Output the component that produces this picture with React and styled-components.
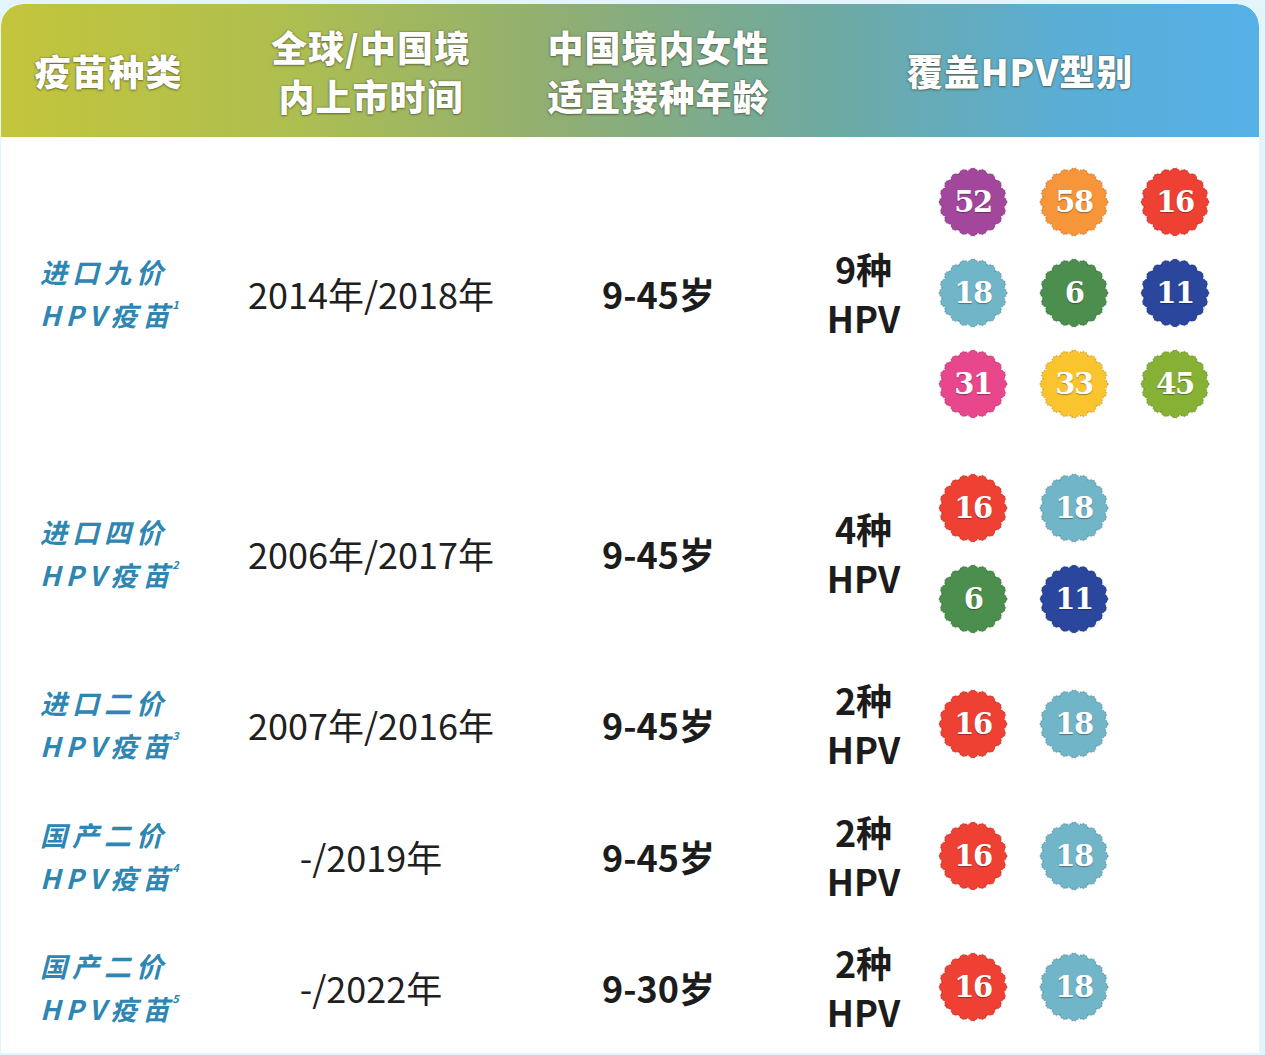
import React from "react";
import styled, { createGlobalStyle } from "styled-components";

const GlobalStyle = createGlobalStyle`
  html, body {
    margin: 0;
    padding: 0;
    background: #e3f5fa;
  }
  body {
    font-family: "Noto Sans CJK SC", "Noto Sans", sans-serif;
  }
`;

const COLORS = {
  52: "#a2479c",
  58: "#f7953a",
  16: "#ee4134",
  18: "#71b5c9",
  6: "#4b8e4e",
  11: "#2a479d",
  31: "#e8478b",
  33: "#f9c42e",
  45: "#86b135",
};

const ROWS = [
  { name: "进口九价", sup: "1", date: "2014年/2018年", age: "9-45岁", count: "9种", types: [52, 58, 16, 18, 6, 11, 31, 33, 45], h: 312, cols: 3 },
  { name: "进口四价", sup: "2", date: "2006年/2017年", age: "9-45岁", count: "4种", types: [16, 18, 6, 11], h: 208, cols: 2 },
  { name: "进口二价", sup: "3", date: "2007年/2016年", age: "9-45岁", count: "2种", types: [16, 18], h: 134, cols: 2 },
  { name: "国产二价", sup: "4", date: "-/2019年", age: "9-45岁", count: "2种", types: [16, 18], h: 130, cols: 2 },
  { name: "国产二价", sup: "5", date: "-/2022年", age: "9-30岁", count: "2种", types: [16, 18], h: 132, cols: 2 },
];

// scalloped seal outline
function sealPath() {
  const pts = [];
  const n = 400;
  for (let i = 0; i <= n; i++) {
    const t = (i / n) * Math.PI * 2;
    const r = 45 + 3.5 * Math.abs(Math.cos(10 * t));
    pts.push(`${(50 + r * Math.cos(t)).toFixed(2)},${(50 + r * Math.sin(t)).toFixed(2)}`);
  }
  return "M" + pts.join("L") + "Z";
}
const SEAL = sealPath();

function Badge({ value }) {
  return (
    <BadgeWrap>
      <svg width="70" height="70" viewBox="0 0 100 100">
        <path d={SEAL} fill={COLORS[value]} stroke="rgba(0,0,0,0.22)" strokeWidth="2.5" strokeDasharray="1.5 3" />
      </svg>
      <BadgeNum>{value}</BadgeNum>
    </BadgeWrap>
  );
}

export default function App() {
  return (
    <>
      <GlobalStyle />
      <Card>
        <Header>
          <HeadCell>疫苗种类</HeadCell>
          <HeadCell>全球/中国境<br />内上市时间</HeadCell>
          <HeadCell>中国境内女性<br />适宜接种年龄</HeadCell>
          <HeadCell $wide>覆盖HPV型别</HeadCell>
        </Header>
        {ROWS.map((r, i) => (
          <Row key={i} $h={r.h}>
            <Name>
              <NameLine>{r.name}</NameLine>
              <NameLine>
                HPV疫苗<Sup>{r.sup}</Sup>
              </NameLine>
            </Name>
            <DateCell>{r.date}</DateCell>
            <Age>{r.age}</Age>
            <Count>
              {r.count}
              <br />
              HPV
            </Count>
            <BadgeGrid $cols={r.cols}>
              {r.types.map((t, j) => (
                <Badge key={j} value={t} />
              ))}
            </BadgeGrid>
          </Row>
        ))}
      </Card>
    </>
  );
}

// ============================== STYLES ==============================

const COLS = "215px 310px 265px 145px 1fr";

const Card = styled.div`
  margin: 4px 6px 5px 1px;
  background: #ffffff;
  border-radius: 22px 22px 0 0;
  overflow: hidden;
`;

const Header = styled.div`
  display: grid;
  grid-template-columns: ${COLS};
  height: 133px;
  align-items: center;
  background: linear-gradient(
    90deg,
    #c3c53b 0%,
    #afbf4f 22%,
    #8fae74 45%,
    #6fa99f 65%,
    #5aaed6 85%,
    #56b1e8 100%
  );
  border-radius: 22px 22px 0 0;
`;

const HeadCell = styled.div`
  grid-column: ${(p) => (p.$wide ? "4 / 6" : "auto")};
  text-align: center;
  color: #ffffff;
  font-size: 36px;
  font-weight: 900;
  line-height: 49px;
  letter-spacing: 1px;
  text-shadow: 0 0 2px rgba(70, 70, 40, 0.75), 0 1px 2px rgba(60, 60, 40, 0.5);
  padding-right: ${(p) => (p.$wide ? "10px" : "0")};
`;

const Row = styled.div`
  display: grid;
  grid-template-columns: ${COLS};
  height: ${(p) => p.$h}px;
  align-items: center;
`;

const Name = styled.div`
  padding-left: 39px;
  color: #2e86b2;
  font-size: 27px;
  font-weight: 700;
  font-style: italic;
  letter-spacing: 5px;
  white-space: nowrap;
`;

const NameLine = styled.div`
  height: 43px;
  line-height: 43px;
`;

const Sup = styled.span`
  display: inline-block;
  font-size: 11px;
  line-height: 11px;
  letter-spacing: 0;
  vertical-align: top;
  margin-top: 6px;
  margin-left: -2px;
`;

const DateCell = styled.div`
  text-align: center;
  font-size: 36px;
  color: #202020;
  white-space: nowrap;
`;

const Age = styled.div`
  text-align: center;
  font-size: 36px;
  font-weight: 700;
  color: #1c1c1c;
`;

const Count = styled.div`
  text-align: center;
  font-size: 36px;
  font-weight: 700;
  color: #1c1c1c;
  line-height: 49px;
`;

const BadgeGrid = styled.div`
  display: grid;
  grid-template-columns: repeat(${(p) => p.$cols}, 70px);
  column-gap: 31px;
  row-gap: 21px;
  padding-left: 2px;
`;

const BadgeWrap = styled.div`
  position: relative;
  width: 70px;
  height: 70px;

  svg {
    display: block;
  }
`;

const BadgeNum = styled.span`
  position: absolute;
  inset: 0;
  display: flex;
  align-items: center;
  justify-content: center;
  color: #ffffff;
  font-family: "DejaVu Serif", serif;
  font-weight: 700;
  font-size: 29px;
  letter-spacing: -1.5px;
  text-shadow: 0 1px 1px rgba(0, 0, 0, 0.35);
`;
